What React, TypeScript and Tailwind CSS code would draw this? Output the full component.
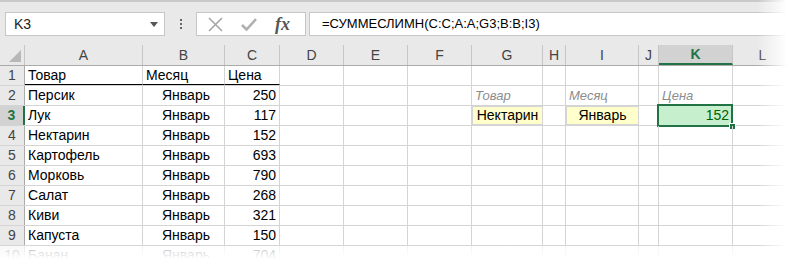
const cols = [
  { name: 'A', w: 118 },
  { name: 'B', w: 82 },
  { name: 'C', w: 55 },
  { name: 'D', w: 64 },
  { name: 'E', w: 64 },
  { name: 'F', w: 64 },
  { name: 'G', w: 71 },
  { name: 'H', w: 23 },
  { name: 'I', w: 73 },
  { name: 'J', w: 20 },
  { name: 'K', w: 74 },
  { name: 'L', w: 60 },
];

const data: [string, string, string][] = [
  ['Товар', 'Месяц', 'Цена'],
  ['Персик', 'Январь', '250'],
  ['Лук', 'Январь', '117'],
  ['Нектарин', 'Январь', '152'],
  ['Картофель', 'Январь', '693'],
  ['Морковь', 'Январь', '790'],
  ['Салат', 'Январь', '268'],
  ['Киви', 'Январь', '321'],
  ['Капуста', 'Январь', '150'],
  ['Банан', 'Январь', '704'],
];

const Cell = ({ w, children, className = '' }: { w: number; children?: React.ReactNode; className?: string }) => (
  <div
    style={{ width: w }}
    className={`relative h-full shrink-0 border-r border-[#d4d4d4] flex items-center px-[3px] overflow-visible whitespace-nowrap ${className}`}
  >
    {children}
  </div>
);

const App = () => {
  return (
    <div className="relative w-[787px] h-[259px] overflow-hidden bg-[#e9e9e9] font-['Liberation_Sans',Arial,sans-serif] text-[14px] text-black">
      <div className="h-[2px] bg-[#c9c9c9]" />

      {/* formula bar */}
      <div className="flex items-center h-[43px] pt-[8px] pb-[7px]">
        <div className="ml-[5px] w-[160px] h-[24px] bg-white border border-[#c6c6c6] flex items-center justify-between pl-[8px] pr-[6px]">
          <span className="text-[#222]">K3</span>
          <svg width="8" height="5" viewBox="0 0 8 5"><path d="M0 0h8L4 5z" fill="#555" /></svg>
        </div>
        <div className="w-[31px] flex flex-col items-center gap-[2px]">
          <span className="w-[2px] h-[2px] bg-[#666]" />
          <span className="w-[2px] h-[2px] bg-[#666]" />
          <span className="w-[2px] h-[2px] bg-[#666]" />
        </div>
        <div className="w-[110px] h-[24px] bg-white border border-[#c6c6c6] flex items-center pl-[11px]">
          <svg width="15" height="15" viewBox="0 0 15 15" className="mr-[18px]">
            <path d="M1 1L14 14M14 1L1 14" stroke="#a6a6a6" strokeWidth="1.6" />
          </svg>
          <svg width="16" height="14" viewBox="0 0 16 14" className="mr-[18px]">
            <path d="M1 8l4.5 4.5L15 2" stroke="#b0b0b0" strokeWidth="2.6" fill="none" />
          </svg>
          <span className="font-['Liberation_Serif',serif] italic font-bold text-[18px] text-[#555] leading-none">fx</span>
        </div>
        <div className="ml-[3px] flex-1 h-[24px] bg-white border border-[#c6c6c6] flex items-center pl-[12px] text-[13px]">
          =СУММЕСЛИМН(C:C;A:A;G3;B:B;I3)
        </div>
      </div>

      {/* sheet */}
      <div className="bg-white">
        {/* column headers */}
        <div className="flex h-[21px] bg-[#e9e9e9] border-b border-[#ababab] text-[#444]">
          <div className="w-[25px] shrink-0 h-full border-r border-[#c6c6c6] flex items-end justify-end pr-[3px] pb-[3px]">
            <svg width="12" height="12" viewBox="0 0 12 12"><path d="M12 0V12H0z" fill="#b8b8b8" /></svg>
          </div>
          {cols.map((c) => (
            <div
              key={c.name}
              style={{ width: c.w }}
              className={`shrink-0 h-full border-r border-[#c6c6c6] flex items-center justify-center ${
                c.name === 'K' ? 'bg-[#d2d2d2] text-[#217346] font-bold border-b-2 border-b-[#217346]' : ''
              }`}
            >
              {c.name}
            </div>
          ))}
        </div>

        {data.map((row, i) => {
          const r = i + 1;
          const faded = r === 10;
          return (
            <div key={r} className={`flex h-[20px] border-b border-[#d4d4d4] ${faded ? 'opacity-30' : ''}`}>
              <div
                className={`w-[25px] shrink-0 h-full flex items-center justify-center ${
                  r === 3
                    ? 'bg-[#d2d2d2] text-[#217346] font-bold border-r-2 border-[#217346]'
                    : 'bg-[#e9e9e9] text-[#444] border-r border-[#ababab]'
                }`}
              >
                {r}
              </div>
              <Cell w={118} className={r === 1 ? 'border-b border-b-black' : ''}>{row[0]}</Cell>
              <Cell w={82} className={r === 1 ? 'border-b border-b-black' : 'justify-end pr-[14px]'}>{row[1]}</Cell>
              <Cell w={55} className={r === 1 ? 'border-b border-b-black' : 'justify-end'}>{row[2]}</Cell>
              <Cell w={64} />
              <Cell w={64} />
              <Cell w={64} />
              {r === 2 ? (
                <Cell w={71} className="italic text-[#8c8c8c] text-[13px]">Товар</Cell>
              ) : r === 3 ? (
                <Cell w={71} className="bg-[#ffffcc] border border-[#b4b4a0] justify-center">Нектарин</Cell>
              ) : (
                <Cell w={71} />
              )}
              <Cell w={23} />
              {r === 2 ? (
                <Cell w={73} className="italic text-[#8c8c8c] text-[13px]">Месяц</Cell>
              ) : r === 3 ? (
                <Cell w={73} className="bg-[#ffffcc] border border-[#b4b4a0] justify-center">Январь</Cell>
              ) : (
                <Cell w={73} />
              )}
              <Cell w={20} />
              {r === 2 ? (
                <Cell w={74} className="italic text-[#8c8c8c] text-[13px]">Цена</Cell>
              ) : r === 3 ? (
                <Cell w={74} className="bg-[#c6efce] text-[#006100] justify-end">
                  152
                  <div className="absolute -left-[2px] -top-[2px] -right-[1px] -bottom-[2px] border-2 border-[#217346]" />
                  <div className="absolute -right-[4px] -bottom-[5px] w-[5px] h-[5px] bg-[#217346] border border-white box-content" />
                </Cell>
              ) : (
                <Cell w={74} />
              )}
              <Cell w={60} />
            </div>
          );
        })}
      </div>

      {/* soft fade at right and bottom edges */}
      <div className="pointer-events-none absolute right-0 top-0 h-full w-[30px] bg-gradient-to-r from-transparent to-white" />
      <div className="pointer-events-none absolute left-0 bottom-0 w-full h-[14px] bg-gradient-to-b from-transparent to-white" />
    </div>
  );
};

export default App;
